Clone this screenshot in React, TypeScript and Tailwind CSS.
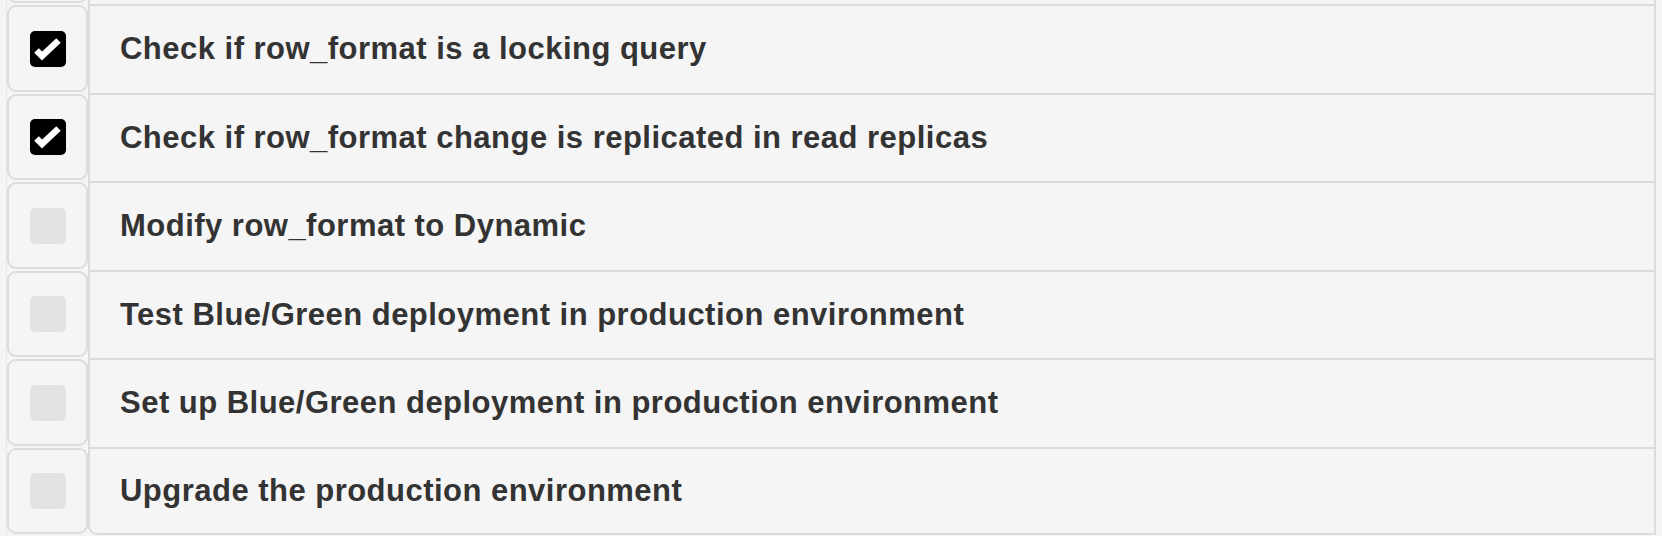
import React from "react";

const items: { label: string; done: boolean }[] = [
  { label: "", done: false },
  { label: "Check if row_format is a locking query", done: true },
  { label: "Check if row_format change is replicated in read replicas", done: true },
  { label: "Modify row_format to Dynamic", done: false },
  { label: "Test Blue/Green deployment in production environment", done: false },
  { label: "Set up Blue/Green deployment in production environment", done: false },
  { label: "Upgrade the production environment", done: false },
];

function CheckedBox() {
  return (
    <svg width="36" height="36" viewBox="0 0 36 36">
      <rect x="0" y="0" width="36" height="36" rx="5" fill="#000" />
      <path
        d="M6.5 19.5 L12 25 L28.5 9.5"
        fill="none"
        stroke="#fff"
        strokeWidth="6.5"
        strokeLinejoin="miter"
        strokeLinecap="butt"
      />
    </svg>
  );
}

function EmptyBox() {
  return <div className="w-[36px] h-[36px] rounded-[5px] bg-[#e2e2e2]" />;
}

export default function App() {
  return (
    <div
      className="w-[1662px] h-[536px] overflow-hidden bg-[#f5f5f5]"
      style={{ fontFamily: '"Liberation Sans", Arial, sans-serif' }}
    >
      <div className="mx-[6px] -mt-[84px] flex flex-col border-l border-r-2 border-[#dcdcdc] border-l-[#e6e6e6]">
        {items.map((it, i) => {
          const last = i === items.length - 1;
          const h = i % 2 === 0 ? "h-[88px]" : "h-[89px]";
          return (
            <div key={i} className={`flex ${h}`}>
              <div className="w-[81px] shrink-0 py-[1px]">
                <div className="h-full border-2 border-[#dcdcdc] rounded-[9px] flex items-center justify-center">
                  {i > 0 && (it.done ? <CheckedBox /> : <EmptyBox />)}
                </div>
              </div>
              <div
                className={`flex-1 flex items-center pl-[30px] pb-[2px] border-t-2 border-l-2 border-[#dcdcdc] ${
                  last ? "border-b-2 rounded-bl-[9px]" : ""
                }`}
              >
                <span className="text-[31px] tracking-[0.48px] font-bold text-[#333333] leading-none">
                  {it.label}
                </span>
              </div>
            </div>
          );
        })}
      </div>
    </div>
  );
}
